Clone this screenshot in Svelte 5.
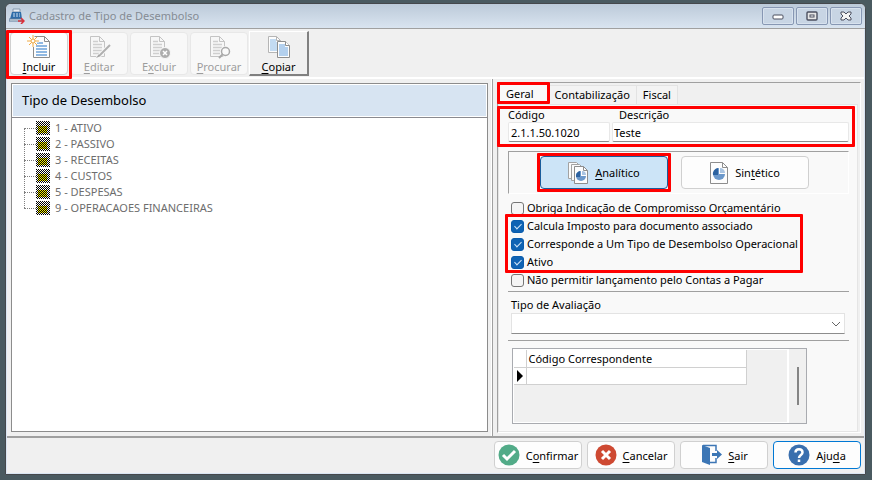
<script lang="ts">
  type ToolIcon = 'new' | 'edit' | 'delete' | 'search' | 'copy'
  type Tool = {
    pre: string
    key: string
    post: string
    icon: ToolIcon
    disabled?: boolean
    marked?: boolean
    raised?: boolean
  }

  const tools: Tool[] = [
    { pre: '', key: 'I', post: 'ncluir', icon: 'new', marked: true },
    { pre: '', key: 'E', post: 'ditar', icon: 'edit', disabled: true },
    { pre: 'E', key: 'x', post: 'cluir', icon: 'delete', disabled: true },
    { pre: '', key: 'P', post: 'rocurar', icon: 'search', disabled: true },
    { pre: '', key: 'C', post: 'opiar', icon: 'copy', raised: true },
  ]

  const nodes = [
    '1 - ATIVO',
    '2 - PASSIVO',
    '3 - RECEITAS',
    '4 - CUSTOS',
    '5 - DESPESAS',
    '9 - OPERACAOES FINANCEIRAS',
  ]

  const tabs = ['Geral', 'Contabilização', 'Fiscal']

  let activeTab = $state('Geral')
  let kind = $state('analitico')
  let codigo = $state('2.1.1.50.1020')
  let descricao = $state('Teste')
  let correspondente = $state('')
  let obriga = $state(false)
  let imposto = $state(true)
  let operacional = $state(true)
  let ativo = $state(true)
  let naoPermitir = $state(false)
</script>

{#snippet pie(cx: number, cy: number, r: number)}
  <circle {cx} {cy} {r} fill="#6b98cb" />
  <path d="M{cx} {cy - r}v{r}h{r}v{-r}z" fill="#fdfdfd" />
  <path d="M{cx + 1} {cy - 1}v{1 - r}a{r - 1} {r - 1} 0 0 1 {r - 1} {r - 1}z" fill="#a9c4e2" />
  <path d="M{cx - 1} {cy - r}a{r} {r} 0 0 0 {1 - r} {r + 1}h{r - 1}z" fill="#2c62a0" />
{/snippet}

<div class="desktop">
  <div class="window">
    <header class="titlebar">
      <svg class="app-icon" width="16" height="16" viewBox="0 0 16 16">
        <path d="M4 1h7v3H4z" fill="#e8eef4" stroke="#8498ad" />
        <path d="M3 4h9l1 7H1z" fill="#2f6da8" />
        <path d="M4 6h2M7 6h2M10 6h1M4 8h2M7 8h2M10 8h1" stroke="#cfe2f4" />
        <path d="M0 11h13v2H0z" fill="#f2f5f8" stroke="#5f7c99" />
        <path d="M9 13h5M12 10l3 3-3 3" fill="none" stroke="#d9303a" stroke-width="1.5" />
      </svg>
      <span class="title">Cadastro de Tipo de Desembolso</span>
      <div class="window-buttons">
        <button type="button" class="win-btn" aria-label="Minimizar">
          <svg width="12" height="10" viewBox="0 0 12 10">
            <rect x="1" y="4" width="10" height="4" rx="1" fill="#fff" stroke="#4b4f5f" />
          </svg>
        </button>
        <button type="button" class="win-btn" aria-label="Maximizar">
          <svg width="12" height="10" viewBox="0 0 12 10">
            <rect x="1" y="1" width="10" height="8" rx="1" fill="#e6e6e6" stroke="#4b4f5f" stroke-width="1.4" />
            <rect x="4" y="4" width="4" height="2" fill="#fff" stroke="#4b4f5f" />
          </svg>
        </button>
        <button type="button" class="win-btn" aria-label="Fechar">
          <svg width="12" height="10" viewBox="0 0 12 10">
            <path d="M1 1h3l2 2 2-2h3v2L9 5l2 2v2H8L6 7 4 9H1V7l2-2-2-2z" fill="#f4f4f4" stroke="#4b4f5f" />
          </svg>
        </button>
      </div>
    </header>

    <div class="toolbar">
      {#each tools as tool (tool.icon)}
        <button
          type="button"
          class="tool"
          class:marked={tool.marked}
          class:raised={tool.raised}
          disabled={tool.disabled}
        >
          <svg width="24" height="24" viewBox="0 0 24 24" fill="none">
            {#if tool.icon === 'copy'}
              <path d="M1.5 1.5h8l4 4v12h-12z" fill="#fdfdfd" stroke="#b5b5b5" />
              <path d="M3 4h6v3h3v9H3z" fill="#c3dbf2" />
              <path d="M9.5 1.5v4h4" stroke="#b5b5b5" />
              <path d="M10.5 6.5h8l4 4v12h-12z" fill="#fdfdfd" stroke="#8e8e8e" />
              <path d="M12 9h6v3h3v9h-9z" fill="#b3d0ee" />
              <path d="M18.5 6.5v4h4" fill="#fff" stroke="#8e8e8e" />
            {:else if tool.icon === 'new'}
              <path d="M6.5 1.5h11l5 5v16h-16z" fill="#fdfdfd" stroke="#8c8c8c" />
              <path d="M17.5 1.5v5h5" stroke="#8c8c8c" />
              <path d="M10 8h6M9 11h11M9 14h11M9 17h11M9 20h11" stroke="#8fb8e2" stroke-width="2" />
              <path d="M6 1v11M0 6h12" stroke="#fff" stroke-width="3" />
              <path d="M6 0v12M0 6h12M2 2l8 8M10 2l-8 8" stroke="#efaa45" />
              <circle cx="6" cy="6" r="2" fill="#fff" stroke="#efaa45" />
            {:else}
              <path d="M3.5 1.5h9l5 5v15h-14z" fill="#f7f7f7" stroke="#c4c4c4" />
              <path d="M12.5 1.5v5h5" stroke="#c4c4c4" />
              <path d="M6 6.5h5M6 9.5h9M6 12.5h9M6 15.5h9M6 18.5h7" stroke="#cfcfcf" stroke-width="1.5" />
              {#if tool.icon === 'edit'}
                <path d="M23 10L12 21l-2 3" stroke="#f8f8f8" stroke-width="4" />
                <path d="M23 10L13 20" stroke="#b0b0b0" stroke-width="2" />
                <path d="M12 19l-3 4 5-2z" fill="#a4a4a4" />
              {:else if tool.icon === 'delete'}
                <circle cx="18" cy="18" r="5.5" fill="#adadad" stroke="#f8f8f8" />
                <path d="M16 16l4 4M20 16l-4 4" stroke="#fff" stroke-width="1.5" />
              {:else}
                <circle cx="18.5" cy="16.5" r="5.5" fill="#f8f8f8" />
                <circle cx="18.5" cy="16.5" r="4" fill="#fafafa" stroke="#a9a9a9" stroke-width="1.5" />
                <path d="M16 19l-4 4" stroke="#a9a9a9" stroke-width="2" />
              {/if}
            {/if}
          </svg>
          <span>{tool.pre}<u>{tool.key}</u>{tool.post}</span>
        </button>
      {/each}
    </div>

    <main class="body">
      <section class="tree-pane">
        <div class="tree-box">
          <h2 class="tree-header">Tipo de Desembolso</h2>
          <ul class="tree">
            {#each nodes as node (node)}
              <li>
                <span class="branch"></span>
                <svg class="node-icon" width="14" height="14" viewBox="0 0 14 14" shape-rendering="crispEdges">
                  <rect width="14" height="14" fill="#fff" />
                  <rect x="2" y="5" width="9" height="7" fill="#f4ee00" />
                  {#each Array(14) as _, row}
                    <path d="M{row % 2} {row + 0.5}h14" stroke="#000" stroke-dasharray="1 1" />
                  {/each}
                </svg>
                {node}
              </li>
            {/each}
          </ul>
        </div>
      </section>

      <section class="form-pane">
        <div class="form-box">
          <div class="tabs" role="tablist">
            {#each tabs as tab (tab)}
              <button
                type="button"
                role="tab"
                class="tab"
                class:active={activeTab === tab}
                class:marked={tab === 'Geral'}
                aria-selected={activeTab === tab}
                onclick={() => (activeTab = tab)}>{tab}</button
              >
            {/each}
          </div>

          <div class="tab-page">
            <div class="fields marked">
              <div class="field code">
                <label for="codigo">Código</label>
                <input id="codigo" type="text" bind:value={codigo} />
              </div>
              <div class="field description">
                <label for="descricao">Descrição</label>
                <input id="descricao" type="text" bind:value={descricao} />
              </div>
            </div>

            <div class="kinds">
              <button
                type="button"
                class="kind marked"
                class:selected={kind === 'analitico'}
                onclick={() => (kind = 'analitico')}
              >
                <svg width="20" height="22" viewBox="0 0 20 22" fill="none">
                  <path d="M.5 .5h8l3 3v13h-11z" fill="#fafafa" stroke="#a2a2a2" />
                  <path d="M3.5 2.5h8l3 3v13h-11z" fill="#fafafa" stroke="#a2a2a2" />
                  <path d="M6.5 4.5h9l4 4v13h-13z" fill="#fdfdfd" stroke="#8d8d8d" />
                  <path d="M15.5 4.5v4h4" stroke="#8d8d8d" />
                  {@render pie(13, 14, 5)}
                </svg>
                <span><u>A</u>nalítico</span>
              </button>
              <button
                type="button"
                class="kind"
                class:selected={kind === 'sintetico'}
                onclick={() => (kind = 'sintetico')}
              >
                <svg width="18" height="24" viewBox="0 0 18 24" fill="none">
                  <path d="M.5 1.5h12l5 5v16H.5z" fill="#fdfdfd" stroke="#8d8d8d" />
                  <path d="M12.5 1.5v5h5" stroke="#8d8d8d" />
                  {@render pie(9, 13, 6)}
                </svg>
                <span>Sin<u>t</u>ético</span>
              </button>
            </div>

            <div class="checks">
              <label><input type="checkbox" bind:checked={obriga} />Obriga Indicação de Compromisso Orçamentário</label>
              <div class="check-group marked">
                <label><input type="checkbox" bind:checked={imposto} />Calcula Imposto para documento associado</label>
                <label><input type="checkbox" bind:checked={operacional} />Corresponde a Um Tipo de Desembolso Operacional</label>
                <label><input type="checkbox" bind:checked={ativo} />Ativo</label>
              </div>
              <label><input type="checkbox" bind:checked={naoPermitir} />Não permitir lançamento pelo Contas a Pagar</label>
            </div>

            <div class="rating">
              <label for="avaliacao">Tipo de Avaliação</label>
              <div class="select-wrap">
                <select id="avaliacao"><option value=""></option></select>
                <svg width="10" height="6" viewBox="0 0 10 6" fill="none">
                  <path d="M1 1l4 4 4-4" stroke="#666" />
                </svg>
              </div>
            </div>

            <div class="grid-box">
              <div class="grid-area">
                <table>
                  <thead>
                    <tr><th class="row-mark"></th><th>Código Correspondente</th></tr>
                  </thead>
                  <tbody>
                    <tr>
                      <td class="row-mark">
                        <svg width="6" height="12" viewBox="0 0 6 12"><path d="M0 0l6 6-6 6z" /></svg>
                      </td>
                      <td><input type="text" aria-label="Código Correspondente" bind:value={correspondente} /></td>
                    </tr>
                  </tbody>
                </table>
              </div>
              <div class="scrollbar"><div class="thumb"></div></div>
            </div>
          </div>
        </div>
      </section>
    </main>

    <footer class="actions">
      <button type="button" class="action">
        <svg width="22" height="22" viewBox="0 0 22 22" fill="none">
          <circle cx="11" cy="11" r="10.5" fill="#52ab88" />
          <path d="M5 11l4 4 8-8" stroke="#fff" stroke-width="3" />
        </svg>
        <span>C<u>o</u>nfirmar</span>
      </button>
      <button type="button" class="action">
        <svg width="22" height="22" viewBox="0 0 22 22" fill="none">
          <circle cx="11" cy="11" r="10.5" fill="#ce4932" />
          <path d="M7 7l8 8M15 7l-8 8" stroke="#fff" stroke-width="3" />
        </svg>
        <span><u>C</u>ancelar</span>
      </button>
      <button type="button" class="action">
        <svg width="22" height="22" viewBox="0 0 22 22" fill="none">
          <path d="M3 1.5h13V7M16 14v4.5h-6" stroke="#3c76b5" stroke-width="1.5" />
          <path d="M2 1l8 3v17l-8-3z" fill="#3c76b5" />
          <path d="M12 9h5V6l5 4.5-5 4.500v-3h-5z" fill="#3c76b5" />
        </svg>
        <span><u>S</u>air</span>
      </button>
      <button type="button" class="action default">
        <svg width="22" height="22" viewBox="0 0 22 22" fill="none">
          <circle cx="11" cy="11" r="10.5" fill="#3a6fae" />
          <path d="M7.5 8.5c0-4.5 7-4.5 7 0 0 2.5-3.5 2.5-3.5 5.5M11 15.5v2.5" stroke="#fff" stroke-width="2.5" />
        </svg>
        <span>Aju<u>d</u>a</span>
      </button>
    </footer>
  </div>
</div>

<style>
  :global(body) {
    background: #4a5a60;
  }

  .desktop {
    box-sizing: border-box;
    display: flex;
    min-height: 100vh;
    padding: 3px 6px 5px 5px;
    font-family: 'Noto Sans', 'Open Sans', sans-serif;
    font-size: 11px;
    line-height: 16px;
    color: #000;
  }

  .desktop *,
  .desktop *::after {
    box-sizing: border-box;
  }

  button,
  input,
  select {
    margin: 0;
    font: inherit;
    color: inherit;
  }

  svg {
    display: block;
    flex-shrink: 0;
  }

  u {
    text-underline-offset: 2px;
  }

  .window {
    flex: 1;
    min-width: 0;
    display: flex;
    flex-direction: column;
    border: 1px solid #45484c;
    border-radius: 6px 6px 0 0;
    background: #f0f0f0;
    box-shadow: inset 0 0 0 1px #d9e5f2;
    overflow: hidden;
  }

  /* Callout frame drawn around the highlighted controls */
  .marked {
    position: relative;
  }

  .marked::after {
    content: '';
    position: absolute;
    inset: -4px;
    z-index: 1;
    border: 3px solid #f00;
    border-radius: 1px;
    pointer-events: none;
  }

  .titlebar {
    display: flex;
    align-items: center;
    height: 25px;
    padding: 0 3px;
    border-bottom: 1px solid #a0a0a0;
    background: linear-gradient(#bccad9, #d9e4f0);
  }

  .title {
    flex: 1;
    margin-left: 4px;
    color: #858c94;
  }

  .window-buttons {
    display: flex;
    gap: 2px;
  }

  .win-btn {
    display: flex;
    align-items: center;
    justify-content: center;
    width: 32px;
    height: 18px;
    padding: 0;
    border: 1px solid #8797b3;
    border-radius: 2px;
    background: #c8d5e4;
    box-shadow: inset 0 0 0 1px #d8e2ee;
  }

  .toolbar {
    display: flex;
    gap: 2px;
    padding: 2px 3px 1px;
    border-bottom: 2px solid #fff;
    margin: 0 1px;
  }

  .tool {
    display: flex;
    flex-direction: column;
    align-items: center;
    width: 58px;
    height: 43px;
    margin: 1px 0;
    padding: 2px 0 0;
    border: 1px solid #d0d0d0;
    border-radius: 4px;
    background: #fdfdfd;
    line-height: 13px;
  }

  .tool:disabled {
    border-color: #e8e8e8;
    background: #f8f8f8;
    color: #9d9d9d;
  }

  .tool span {
    margin-top: 1px;
  }

  .tool.marked::after {
    inset: -3px -5px -5px;
  }

  .tool.raised {
    width: 60px;
    height: 45px;
    margin: 0 0 0 -1px;
    padding-top: 3px;
    border-color: #fff #808080 #808080 #fff;
    border-width: 1px 2px 2px 1px;
    border-radius: 0;
    background: #f0f0f0;
  }

  .body {
    flex: 1;
    display: grid;
    grid-template-columns: minmax(0, 1fr) 372px;
    margin: 0 1px;
    border-bottom: 2px solid #a0a0a0;
  }

  .tree-pane {
    display: flex;
    padding: 4px 3px 4px 4px;
    border-right: 1px solid #fff;
  }

  .tree-box {
    flex: 1;
    display: flex;
    flex-direction: column;
    border: 1px solid #8c8c8c;
    background: #fff;
  }

  .tree-header {
    margin: 0;
    padding: 6px 9px 7px;
    border: 1px solid #fff;
    border-bottom: 0;
    background: #d7e4f2;
    box-shadow: 0 1px #fff, 0 2px #8a8a8f;
    font-size: 13px;
    font-weight: 400;
    line-height: 18px;
  }

  .tree {
    margin: 0;
    padding: 4px 12px;
    list-style: none;
    color: #6d6d6d;
  }

  .tree li {
    position: relative;
    display: flex;
    align-items: center;
    height: 16px;
  }

  .tree li::before {
    content: '';
    position: absolute;
    top: 8px;
    left: 0;
    height: 16px;
    border-left: 1px dotted #808080;
  }

  .tree li:last-child::before {
    height: 0;
  }

  .branch {
    width: 12px;
    border-top: 1px dotted #808080;
  }

  .node-icon {
    margin-right: 5px;
  }

  .form-pane {
    display: flex;
    padding: 3px 3px 3px 4px;
    border-left: 1px solid #a0a0a0;
  }

  .form-box {
    flex: 1;
    min-width: 0;
    display: flex;
    flex-direction: column;
    border: 1px solid #a0a0a0;
    border-right-color: #fff;
    border-bottom-color: #fff;
  }

  .tabs {
    display: flex;
    align-items: flex-end;
    padding: 0 1px;
  }

  .tab {
    height: 19px;
    padding: 0 6px;
    border: 1px solid #e3e3e3;
    border-bottom: 0;
    border-left: 0;
    background: #f3f3f3;
    line-height: 18px;
  }

  .tab.active {
    height: 21px;
    padding: 0 14px 0 7px;
    background: #f9f9f9;
  }

  .tab.marked::after {
    inset: -2px -2px 0;
  }

  .tab-page {
    flex: 1;
    display: flex;
    flex-direction: column;
    margin-right: 2px;
    padding: 3px 8px 7px 9px;
    border: 1px solid #e5e5e5;
    background: #f9f9f9;
  }

  .fields {
    display: flex;
    gap: 2px;
  }

  .fields::after {
    inset: -2px -6px -5px -11px;
  }

  .field {
    display: flex;
    flex-direction: column;
    line-height: 14px;
  }

  .field.code {
    flex: 0 0 102px;
  }

  .field.description {
    flex: 1;
  }

  .description label {
    padding-left: 7px;
  }

  .field input {
    width: 100%;
    height: 20px;
    padding: 0 1px 0 2px;
    border: 1px solid #e8e8e8;
    border-bottom-color: #8c8c8c;
    border-radius: 2px;
    background: #fff;
  }

  .description input {
    padding-left: 1px;
  }

  .kinds {
    display: flex;
    gap: 13px;
    margin-top: 9px;
    padding: 4px 31px;
    border: 1px solid #a0a0a0;
    border-right-color: #fff;
    border-bottom-color: #fff;
  }

  .kind {
    flex: 0 0 128px;
    display: flex;
    align-items: center;
    justify-content: center;
    gap: 7px;
    height: 33px;
    padding: 0;
    border: 1px solid #d0d0d0;
    border-radius: 4px;
    background: #fdfdfd;
  }

  .kind.selected {
    border-color: #1a5c9c;
    background: #cce4f7;
  }

  .checks {
    display: flex;
    flex-direction: column;
    align-items: flex-start;
    margin-top: 5px;
    padding: 0 3px 2px;
    align-self: stretch;
  }

  .checks label {
    display: flex;
    align-items: center;
    height: 18px;
    gap: 3px;
    white-space: nowrap;
  }

  .check-group::after {
    inset: -3px -5px -2px -6px;
  }

  .checks input {
    appearance: none;
    width: 13px;
    height: 13px;
    border: 1px solid #767676;
    border-radius: 3px;
    background: #f5f5f5;
    display: flex;
    justify-content: center;
  }

  .checks input:checked {
    border-color: #0a5cad;
    background: #0f63b4;
  }

  .checks input:checked::before {
    content: '';
    width: 3px;
    height: 6px;
    margin-top: 1px;
    border: solid #d3e7fa;
    border-width: 0 1px 1px 0;
    transform: rotate(45deg);
  }

  .rating {
    display: flex;
    flex-direction: column;
    padding: 5px 4px 6px 3px;
    border-top: 1px solid #a0a0a0;
    border-bottom: 1px solid #a0a0a0;
  }

  .select-wrap {
    position: relative;
    display: flex;
  }

  .select-wrap svg {
    position: absolute;
    top: 8px;
    right: 4px;
    pointer-events: none;
  }

  select {
    appearance: none;
    width: 100%;
    height: 21px;
    border: 1px solid #e3e3e3;
    border-bottom-color: #8c8c8c;
    background: #fff;
  }

  .grid-box {
    flex: 1;
    display: flex;
    margin: 7px 42px 0 4px;
    border: 1px solid #a9abb0;
    background: #f0f0f0;
  }

  .grid-area {
    flex: 1;
    border: 1px solid #fff;
  }

  table {
    border-collapse: collapse;
    width: 233px;
    background: #fff;
  }

  th,
  td {
    height: 17px;
    padding: 0;
    border: 1px solid #d0d0d0;
    border-top: 0;
    line-height: 17px;
    text-align: left;
    font-weight: 400;
  }

  th {
    padding-left: 2px;
  }

  .row-mark {
    width: 12px;
    padding: 0 0 0 3px;
    border-left: 0;
  }

  td input {
    display: block;
    width: 100%;
    height: 16px;
    padding: 0 2px;
    border: 0;
    background: #fff;
  }

  .scrollbar {
    display: flex;
    justify-content: center;
    width: 18px;
    padding: 18px 0;
    border-left: 1px solid #fff;
  }

  .thumb {
    width: 2px;
    background: #858585;
  }

  .actions {
    display: flex;
    justify-content: flex-end;
    gap: 5px;
    padding: 3px 3px 4px;
    margin: 0 1px 1px 0;
  }

  .action {
    display: flex;
    align-items: center;
    justify-content: center;
    gap: 6px;
    width: 88px;
    height: 28px;
    padding: 0;
    border: 1px solid #d0d0d0;
    border-radius: 4px;
    background: #fdfdfd;
  }

  .action span {
    padding-top: 1px;
  }

  .action.default {
    border-color: #0078d4;
  }
</style>
